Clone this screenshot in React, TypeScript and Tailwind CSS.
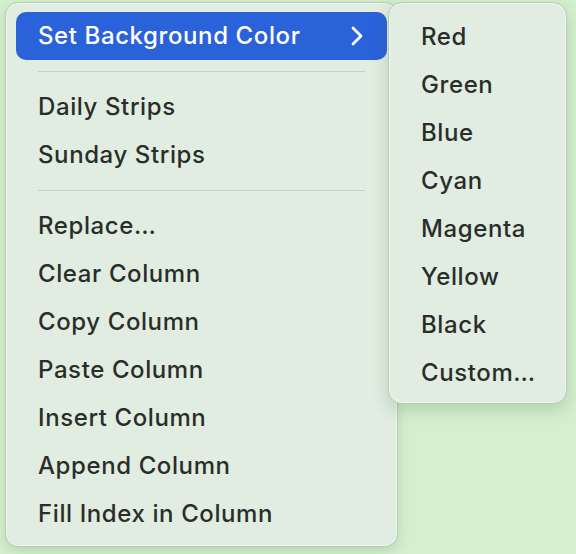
import { ChevronRight } from "lucide-react";

const groupA = ["Daily Strips", "Sunday Strips"];
const groupB = [
  "Replace…",
  "Clear Column",
  "Copy Column",
  "Paste Column",
  "Insert Column",
  "Append Column",
  "Fill Index in Column",
];
const colors = ["Red", "Green", "Blue", "Cyan", "Magenta", "Yellow", "Black", "Custom…"];

function Item({ label }: { label: string }) {
  return (
    <div className="flex h-12 items-center px-[22px] text-[#2a2d2a]">{label}</div>
  );
}

function Separator() {
  return <div className="mx-[22px] my-[11px] h-px bg-[#c3d0c3]" />;
}

export default function App() {
  return (
    <div
      className="relative h-[554px] w-[576px] overflow-hidden bg-[#d4f0cf] text-[24px] font-medium leading-none tracking-[0.6px]"
      style={{ fontFamily: "Inter, 'Noto Sans', sans-serif" }}
    >
      <div className="absolute left-[5px] top-[2px] w-[393px] rounded-[13px] border border-[#b9cbb7] bg-[#e0ede0] px-[10px] pb-[8px] pt-[9px] shadow-[0_4px_12px_rgba(60,90,60,0.18),inset_0_0_0_1px_rgba(255,255,255,0.5)]">
        <div className="flex h-12 items-center justify-between rounded-[10px] bg-[#2a62d9] pl-[22px] pr-[14px] text-white">
          <span>Set Background Color</span>
          <ChevronRight className="h-8 w-8" strokeWidth={2.1} />
        </div>
        <Separator />
        {groupA.map((label) => (
          <Item key={label} label={label} />
        ))}
        <Separator />
        {groupB.map((label) => (
          <Item key={label} label={label} />
        ))}
      </div>

      <div className="absolute left-[388px] top-[2px] w-[179px] rounded-[14px] border border-[#b9cbb7] bg-[#e0ede0] pb-[6px] pt-[10px] shadow-[0_6px_16px_rgba(60,90,60,0.22),inset_0_0_0_1px_rgba(255,255,255,0.5)]">
        {colors.map((label) => (
          <div key={label} className="flex h-12 items-center px-[32px] text-[#2a2d2a]">
            {label}
          </div>
        ))}
      </div>
    </div>
  );
}
